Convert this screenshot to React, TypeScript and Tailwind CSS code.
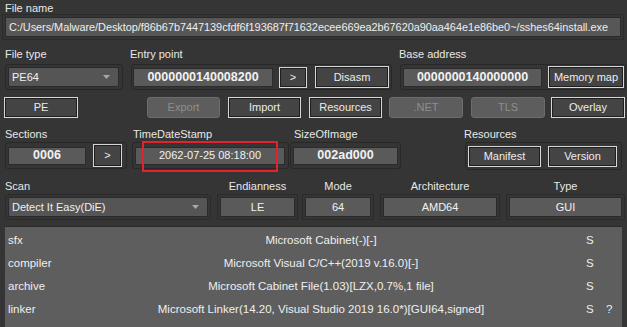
import React from 'react'

type BoxProps = { className?: string; children?: React.ReactNode }

// light-bordered push button (enabled)
function Btn({ className = '', children }: BoxProps) {
  return (
    <div
      className={`flex h-[21px] shrink-0 items-center justify-center border border-[#d6d6d6] bg-[#444444] text-[11px] text-[#ececec] shadow-[inset_0_0_0_1px_#1f1f1f] ${className}`}
    >
      {children}
    </div>
  )
}

// greyed out button
function Off({ className = '', children }: BoxProps) {
  return (
    <div
      className={`flex h-[21px] shrink-0 items-center justify-center rounded-[3px] border border-[#6c6c6c] bg-[#5d5d5d] text-[11px] text-[#8e8e8e] ${className}`}
    >
      {children}
    </div>
  )
}

// read-only value field
function Val({ className = '', bold = false, children }: BoxProps & { bold?: boolean }) {
  return (
    <div
      className={`flex shrink-0 items-center justify-center border border-[#2b2b2b] bg-[#5a5a5a] text-[#f2f2f2] ${
        bold ? 'text-[12.5px] font-bold' : 'text-[11px]'
      } ${className}`}
    >
      {children}
    </div>
  )
}

function Frame({ className = '', children }: BoxProps) {
  return (
    <div className={`flex shrink-0 items-center rounded-[3px] border border-[#282828] ${className}`}>
      {children}
    </div>
  )
}

function Combo({ className = '', children }: BoxProps) {
  return (
    <div
      className={`flex h-[20px] shrink-0 items-center justify-between rounded-[2px] border border-[#2a2a2a] bg-[#555555] pl-[3px] pr-[8px] text-[11px] text-[#f0f0f0] ${className}`}
    >
      <span>{children}</span>
      <svg width="7" height="4" viewBox="0 0 7 4">
        <polygon points="0,0 7,0 3.5,4" fill="#a8a8a8" />
      </svg>
    </div>
  )
}

const results = [
  { type: 'sfx', name: 'Microsoft Cabinet(-)[-]', s: 'S', q: '' },
  { type: 'compiler', name: 'Microsoft Visual C/C++(2019 v.16.0)[-]', s: 'S', q: '' },
  { type: 'archive', name: 'Microsoft Cabinet File(1.03)[LZX,0.7%,1 file]', s: 'S', q: '' },
  { type: 'linker', name: 'Microsoft Linker(14.20, Visual Studio 2019 16.0*)[GUI64,signed]', s: 'S', q: '?' },
]

export default function App() {
  return (
    <div className="flex h-[327px] w-[627px] flex-col overflow-hidden bg-[#353535] font-['Liberation_Sans',Arial,sans-serif] text-[11px] text-[#e8e8e8]">
      {/* file name */}
      <div className="h-[16px] pl-[5px] leading-[16px]">File name</div>
      <div className="ml-[5px] mt-[1px] flex h-[20px] w-[616px] items-center overflow-hidden whitespace-nowrap border border-[#2a2a2a] bg-[#575757] pl-[3px] text-[10.9px] tracking-[-0.03px] text-[#eeeeee] shadow-[0_0_0_2px_#353535,0_0_0_3px_#2b2b2b]">
        C:/Users/Malware/Desktop/f86b67b7447139cfdf6f193687f71632ecee669ea2b67620a90aa464e1e86be0~/sshes64install.exe
      </div>

      {/* file type / entry point / base address */}
      <div className="mt-[9px] flex h-[16px] leading-[16px]">
        <div className="w-[130px] pl-[5px]">File type</div>
        <div className="w-[269px]">Entry point</div>
        <div>Base address</div>
      </div>
      <div className="mt-[2px] flex h-[26px]">
        <Frame className="ml-[5px] w-[118px] pl-[2px]">
          <Combo className="w-[111px]">PE64</Combo>
        </Frame>
        <Frame className="ml-[8px] w-[261px] pl-[1px]">
          <Val bold className="h-[19px] w-[140px]">0000000140008200</Val>
          <Btn className="ml-[6px] w-[28px]">&gt;</Btn>
          <Btn className="ml-[8px] h-[22px] w-[74px]">Disasm</Btn>
        </Frame>
        <Frame className="ml-[8px] w-[226px] pl-[2px]">
          <Val bold className="h-[19px] w-[139px]">0000000140000000</Val>
          <Btn className="ml-[6px] h-[22px] w-[76px]">Memory map</Btn>
        </Frame>
      </div>

      {/* header buttons */}
      <div className="mt-[7px] flex">
        <Btn className="ml-[4px] w-[74px]">PE</Btn>
        <Off className="ml-[69px] w-[73px]">Export</Off>
        <Btn className="ml-[8px] w-[73px]">Import</Btn>
        <Btn className="ml-[8px] w-[73px]">Resources</Btn>
        <Off className="ml-[7px] w-[74px]">.NET</Off>
        <Off className="ml-[8px] w-[74px]">TLS</Off>
        <Btn className="ml-[6px] w-[74px]">Overlay</Btn>
      </div>

      {/* sections / timestamp / size / resources */}
      <div className="mt-[8px] flex h-[16px] leading-[16px]">
        <div className="w-[133px] pl-[5px]">Sections</div>
        <div className="w-[161px]">TimeDateStamp</div>
        <div className="w-[170px]">SizeOfImage</div>
        <div>Resources</div>
      </div>
      <div className="flex h-[28px]">
        <Frame className="ml-[5px] h-[27px] w-[122px] pl-[2px]">
          <Val bold className="h-[18px] w-[78px]">0006</Val>
          <Btn className="ml-[7px] h-[23px] w-[29px]">&gt;</Btn>
        </Frame>
        <Frame className="relative ml-[5px] h-[27px] w-[157px] pl-[2px]">
          <Val className="h-[18px] w-[150px]">2062-07-25 08:18:00</Val>
          <div className="absolute left-[9px] top-[-2px] h-[31px] w-[136px] border-2 border-[#e3232b]" />
        </Frame>
        <Frame className="ml-[1px] h-[27px] w-[111px] pl-[2px]">
          <Val bold className="h-[18px] w-[105px]">002ad000</Val>
        </Frame>
        <Frame className="ml-[64px] h-[28px] w-[157px] pl-[2px]">
          <Btn className="w-[73px]">Manifest</Btn>
          <Btn className="ml-[7px] w-[69px]">Version</Btn>
        </Frame>
      </div>

      {/* scan / endianness / mode / architecture / type */}
      <div className="mt-[8px] flex h-[16px] leading-[16px]">
        <div className="w-[208px] pl-[5px]">Scan</div>
        <div className="ml-[12px] w-[75px] text-center">Endianness</div>
        <div className="ml-[10px] w-[66px] text-center">Mode</div>
        <div className="ml-[12px] w-[114px] text-center">Architecture</div>
        <div className="ml-[12px] w-[113px] text-center">Type</div>
      </div>
      <div className="mt-[3px] flex h-[20px]">
        <Combo className="ml-[8px] w-[200px] shadow-[0_0_0_2px_#353535,0_0_0_3px_#2b2b2b]">
          Detect It Easy(DiE)
        </Combo>
        <Val className="ml-[12px] h-[20px] w-[75px] shadow-[0_0_0_2px_#353535,0_0_0_3px_#2b2b2b]">LE</Val>
        <Val className="ml-[10px] h-[20px] w-[66px] shadow-[0_0_0_2px_#353535,0_0_0_3px_#2b2b2b]">64</Val>
        <Val className="ml-[12px] h-[20px] w-[114px] shadow-[0_0_0_2px_#353535,0_0_0_3px_#2b2b2b]">AMD64</Val>
        <Val className="ml-[12px] h-[20px] w-[113px] shadow-[0_0_0_2px_#353535,0_0_0_3px_#2b2b2b]">GUI</Val>
      </div>

      {/* scan results */}
      <div className="ml-[5px] mt-[9px] flex w-[617px] flex-1 flex-col border-t border-[#2a2a2a] bg-[#5e5e5e] pt-[2px] text-[11.5px] text-[#efefef]">
        {results.map((r) => (
          <div key={r.type} className="flex h-[23px] items-center">
            <div className="w-[62px] pl-[3px]">{r.type}</div>
            <div className="w-[508px] text-center">{r.name}</div>
            <div className="w-[24px] pl-[11px]">{r.s}</div>
            <div className="pl-[7px]">{r.q}</div>
          </div>
        ))}
      </div>
    </div>
  )
}
